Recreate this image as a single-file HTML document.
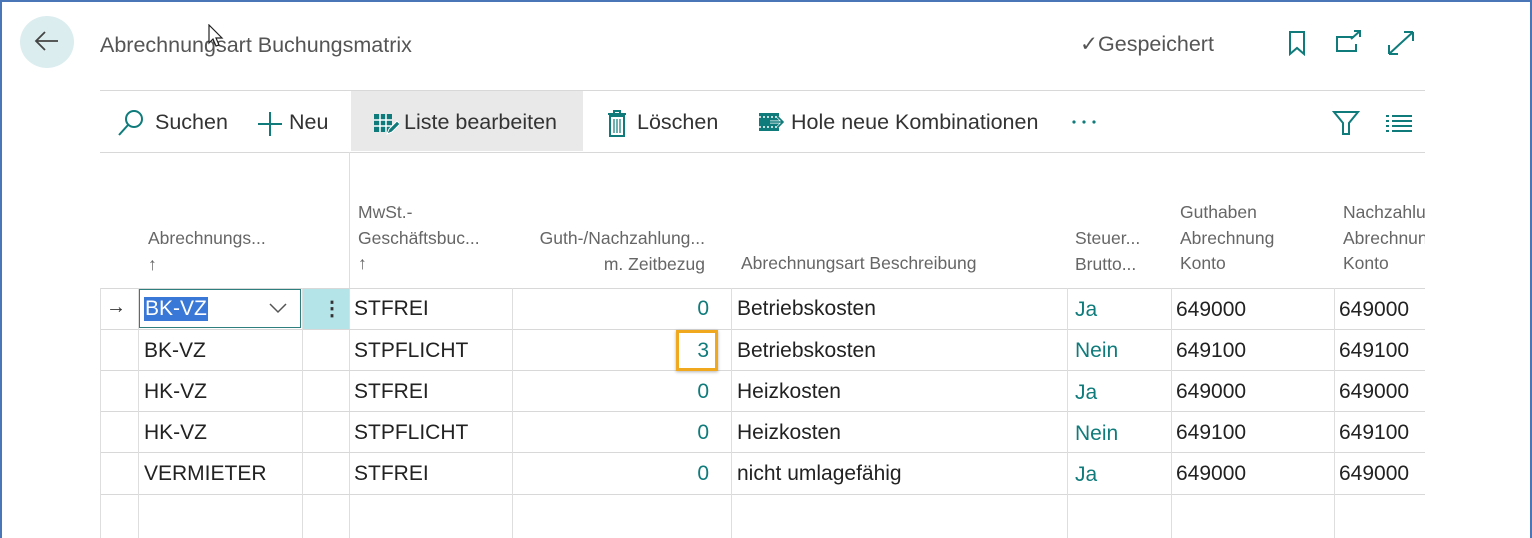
<!DOCTYPE html>
<html><head><meta charset="utf-8"><style>
*{margin:0;padding:0;box-sizing:border-box}
body{width:1532px;height:538px;overflow:hidden;background:#fff;font-family:"Liberation Sans",sans-serif;position:relative;color:#333}
.frame{position:absolute;left:0;top:0;width:1532px;height:538px;border:2px solid #4a76b8;border-bottom:none}
.a{position:absolute;white-space:nowrap}
.hl{position:absolute;height:1px;background:#d8d8d8}
.vl{position:absolute;width:1px;background:#dedede}
.tb{font-size:21.5px;color:#333;top:110px}
.th{font-size:17.5px;color:#666;line-height:25.5px}
.td{font-size:21px;color:#222}
.teal{color:#0f7b7b}
</style></head><body>
<div class="frame"></div>
<div class="a" style="left:20px;top:16px;width:54px;height:52px;border-radius:50%;background:#dcedef"></div>
<svg class="a" style="left:32px;top:28px" width="30" height="26" viewBox="0 0 30 26"><path d="M26 13H4M13 4L4 13l9 9" fill="none" stroke="#444" stroke-width="1.8"/></svg>
<div class="a" style="left:100px;top:33px;font-size:21.5px;color:#555">Abrechnungsart Buchungsmatrix</div>
<svg class="a" style="left:208px;top:24px" width="16" height="24" viewBox="0 0 16 24"><path d="M1 1v18l4-4 3 7 3-1-3-7h6z" fill="#fff" stroke="#222" stroke-width="1.2"/></svg>
<div class="a" style="left:1080px;top:32px;font-size:21.5px;color:#555">✓Gespeichert</div>
<svg class="a" style="left:1288px;top:30px" width="20" height="26" viewBox="0 0 20 26"><path d="M2 2h14v22l-7-6-7 6z" fill="none" stroke="#0f7b7b" stroke-width="2"/></svg>
<svg class="a" style="left:1334px;top:30px" width="30" height="24" viewBox="0 0 30 24"><path d="M20 7H3v14h19v-7M17 9l9-8M20 1h6v6" fill="none" stroke="#0f7b7b" stroke-width="2"/></svg>
<svg class="a" style="left:1386px;top:30px" width="30" height="26" viewBox="0 0 30 26"><path d="M3 24L27 2M3 24v-9M3 24h9M27 2h-9M27 2v9" fill="none" stroke="#0f7b7b" stroke-width="2"/></svg>
<div class="hl" style="left:100px;top:90px;width:1325px"></div>
<div class="a" style="left:351px;top:91px;width:232px;height:60px;background:#e9e9e9"></div>
<svg class="a" style="left:116px;top:108px" width="30" height="30" viewBox="0 0 30 30"><circle cx="18" cy="11" r="8" fill="none" stroke="#0f7b7b" stroke-width="2"/><path d="M12 17L3 27" stroke="#0f7b7b" stroke-width="2"/></svg>
<div class="a tb" style="left:155px">Suchen</div>
<svg class="a" style="left:257px;top:111px" width="26" height="26"><path d="M13 1v24M1 13h24" stroke="#0f7b7b" stroke-width="2"/></svg>
<div class="a tb" style="left:289px">Neu</div>
<svg class="a" style="left:373px;top:112px" width="26" height="24" viewBox="0 0 26 24"><rect x="1" y="2" width="18" height="18" fill="#0f7b7b"/><path d="M1 8h18M1 14h18M7 2v18M13 2v18" stroke="#fff" stroke-width="1.5"/><path d="M14 22l2-5 8-8 3 3-8 8z" fill="#0f7b7b" stroke="#fff" stroke-width="1"/></svg>
<div class="a tb" style="left:404px">Liste bearbeiten</div>
<svg class="a" style="left:606px;top:110px" width="22" height="28" viewBox="0 0 22 28"><path d="M2 4h18M8 4V1h6v3M4 6h14v20H4z" fill="none" stroke="#0f7b7b" stroke-width="2"/><path d="M8 9v14M11 9v14M14 9v14" stroke="#0f7b7b" stroke-width="1.2"/></svg>
<div class="a tb" style="left:637px">Löschen</div>
<svg class="a" style="left:758px;top:110px" width="26" height="24" viewBox="0 0 26 24"><rect x="1" y="3" width="20" height="18" fill="#0f7b7b"/><path d="M1 7h20M1 17h20" stroke="#fff" stroke-width="1.5" stroke-dasharray="2 2"/><path d="M12 12h13M20 7l5 5-5 5" stroke="#fff" stroke-width="3" fill="none"/><path d="M12 12h13M20 7l5 5-5 5" stroke="#0f7b7b" stroke-width="1.6" fill="none"/></svg>
<div class="a tb" style="left:791px">Hole neue Kombinationen</div>
<svg class="a" style="left:1071px;top:119px" width="28" height="6"><circle cx="3" cy="3" r="1.6" fill="#0f7b7b"/><circle cx="13" cy="3" r="1.6" fill="#0f7b7b"/><circle cx="23" cy="3" r="1.6" fill="#0f7b7b"/></svg>
<svg class="a" style="left:1332px;top:110px" width="28" height="26" viewBox="0 0 28 26"><path d="M2 2h24l-9 11v11h-6V13z" fill="none" stroke="#0f7b7b" stroke-width="2"/></svg>
<svg class="a" style="left:1386px;top:114px" width="26" height="20" viewBox="0 0 26 20"><path d="M0 2h3M6 2h20M0 7h3M6 7h20M0 12h3M6 12h20M0 17h3M6 17h20" stroke="#0f7b7b" stroke-width="2"/></svg>
<div class="hl" style="left:100px;top:152px;width:1325px"></div>
<div class="vl" style="left:349px;top:152px;height:386px"></div>
<!-- headers -->
<div class="a th" style="left:148px;top:226px">Abrechnungs...<br>↑</div>
<div class="a th" style="left:358px;top:200px">MwSt.-<br>Geschäftsbuc...<br>↑</div>
<div class="a th" style="left:500px;top:226px;width:205px;text-align:right">Guth-/Nachzahlung...<br>m. Zeitbezug</div>
<div class="a th" style="left:741px;top:251px">Abrechnungsart Beschreibung</div>
<div class="a th" style="left:1075px;top:226px">Steuer...<br>Brutto...</div>
<div class="a th" style="left:1180px;top:200px">Guthaben<br>Abrechnung<br>Konto</div>
<div class="a th" style="left:1343px;top:200px;width:82px;overflow:hidden">Nachzahlung<br>Abrechnung<br>Konto</div>
<!-- grid -->
<div class="hl" style="left:100px;top:288px;width:1325px"></div>
<div class="hl" style="left:100px;top:329px;width:1325px"></div>
<div class="hl" style="left:100px;top:370px;width:1325px"></div>
<div class="hl" style="left:100px;top:411px;width:1325px"></div>
<div class="hl" style="left:100px;top:452px;width:1325px"></div>
<div class="hl" style="left:100px;top:494px;width:1325px"></div>
<div class="vl" style="left:100px;top:288px;height:250px"></div>
<div class="vl" style="left:138px;top:288px;height:250px"></div>
<div class="vl" style="left:302px;top:288px;height:250px"></div>
<div class="vl" style="left:512px;top:288px;height:250px"></div>
<div class="vl" style="left:731px;top:288px;height:250px"></div>
<div class="vl" style="left:1067px;top:288px;height:250px"></div>
<div class="vl" style="left:1171px;top:288px;height:250px"></div>
<div class="vl" style="left:1334px;top:288px;height:250px"></div>
<!-- row1 selected -->
<div class="a" style="left:106px;top:296px;font-size:20px;color:#333">→</div>
<div class="a" style="left:139px;top:289px;width:162px;height:39px;border:1.5px solid #2f7f7f;background:#fff"></div>
<div class="a td" style="left:144px;top:297px;background:#3a78d8;color:#fff;padding:0 1px">BK-VZ</div>
<svg class="a" style="left:268px;top:302px" width="20" height="12"><path d="M2 2l8 8 8-8" fill="none" stroke="#555" stroke-width="1.5"/></svg>
<div class="a" style="left:303px;top:289px;width:46px;height:40px;background:#b5e4e8"></div>
<div class="a" style="left:322px;top:296px;font-size:20px;color:#333;font-weight:bold">⋮</div>
<div class="a td" style="left:354px;top:297px">STFREI</div>
<div class="a td teal" style="left:512px;top:297px;width:197px;text-align:right">0</div>
<div class="a td" style="left:737px;top:297px">Betriebskosten</div>
<div class="a td teal" style="left:1075px;top:298px">Ja</div>
<div class="a td" style="left:1176px;top:298px">649000</div>
<div class="a td" style="left:1339px;top:298px">649000</div>
<!-- row2 -->
<div class="a td" style="left:144px;top:339px">BK-VZ</div>
<div class="a td" style="left:354px;top:339px">STPFLICHT</div>
<div class="a" style="left:676px;top:330px;width:42px;height:41px;border:3px solid #f0a81e;box-shadow:0 1px 3px rgba(0,0,0,.3)"></div>
<div class="a td teal" style="left:512px;top:339px;width:197px;text-align:right">3</div>
<div class="a td" style="left:737px;top:339px">Betriebskosten</div>
<div class="a td teal" style="left:1075px;top:339px">Nein</div>
<div class="a td" style="left:1176px;top:339px">649100</div>
<div class="a td" style="left:1339px;top:339px">649100</div>
<!-- row3 -->
<div class="a td" style="left:144px;top:380px">HK-VZ</div>
<div class="a td" style="left:354px;top:380px">STFREI</div>
<div class="a td teal" style="left:512px;top:380px;width:197px;text-align:right">0</div>
<div class="a td" style="left:737px;top:380px">Heizkosten</div>
<div class="a td teal" style="left:1075px;top:381px">Ja</div>
<div class="a td" style="left:1176px;top:380px">649000</div>
<div class="a td" style="left:1339px;top:380px">649000</div>
<!-- row4 -->
<div class="a td" style="left:144px;top:421px">HK-VZ</div>
<div class="a td" style="left:354px;top:421px">STPFLICHT</div>
<div class="a td teal" style="left:512px;top:421px;width:197px;text-align:right">0</div>
<div class="a td" style="left:737px;top:421px">Heizkosten</div>
<div class="a td teal" style="left:1075px;top:422px">Nein</div>
<div class="a td" style="left:1176px;top:421px">649100</div>
<div class="a td" style="left:1339px;top:421px">649100</div>
<!-- row5 -->
<div class="a td" style="left:144px;top:462px">VERMIETER</div>
<div class="a td" style="left:354px;top:462px">STFREI</div>
<div class="a td teal" style="left:512px;top:462px;width:197px;text-align:right">0</div>
<div class="a td" style="left:737px;top:462px">nicht umlagefähig</div>
<div class="a td teal" style="left:1075px;top:463px">Ja</div>
<div class="a td" style="left:1176px;top:462px">649000</div>
<div class="a td" style="left:1339px;top:462px">649000</div>
</body></html>
